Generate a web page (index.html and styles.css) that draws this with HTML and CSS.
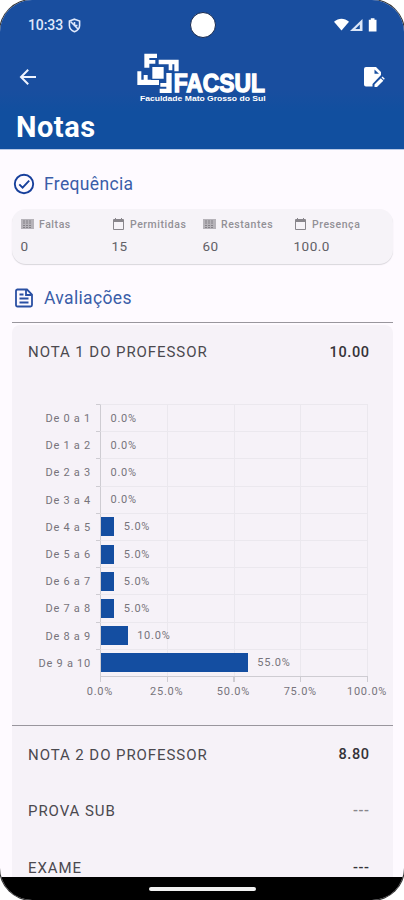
FILE: index.html
```html
<!DOCTYPE html>
<html lang="pt-BR">
<head>
    <meta charset="UTF-8">
    <meta name="viewport" content="width=device-width, initial-scale=1.0">
    <title>Notas</title>
    <link rel="stylesheet" href="styles.css">
</head>
<body>
    <div class="phone">
        <header class="header">
            <div class="status-bar">
                <span class="time">10:33</span>
                <svg class="shield" width="13" height="15" viewBox="0 0 13 15" fill="none" stroke="#dfe8fb" stroke-width="1.6">
                    <path d="M6.5 1.2L11.6 3v4.5c0 3-2 5-5.1 6.2C3.400 12.500 1.400 10.500 1.400 7.500V3z"/>
                    <path d="M2.500 3.500l8 8M6.500 4v3.500h3"/>
                </svg>
                <div class="status-icons">
                    <svg width="46" height="16" viewBox="0 0 46 16" fill="#fff">
                        <path d="M0 4.800C4.500.8 10.500.8 15 4.800L7.500 13.500z"/>
                        <path d="M28.500 2v12H16z" fill="#dce6f8"/>
                        <path d="M25.800 7.500V12h-4.500z" fill="#174f9f"/>
                        <path d="M34.800 2.800h2V1.300h3.700v1.500h2v11.700h-7.700z"/>
                    </svg>
                </div>
            </div>
            <div class="camera"></div>
            <div class="app-bar">
                <svg class="back" width="18" height="18" viewBox="0 0 18 18" fill="none" stroke="#eef3ff" stroke-width="2">
                    <path d="M17 9H2.500M9.200 1.700L2 9l7.200 7.300"/>
                </svg>
                <svg class="logo" width="135" height="56" viewBox="30 15 405 168" fill="#fff">
                    <path d="M61 26h38v13H76v6h18v11H76v12H61z"/>
                    <path d="M104 44h60v35h-13V58h-6v18h-11V58h-30z"/>
                    <path d="M40 120V79h12v25h7V90h12v14h34v16z"/>
                    <path d="M143 84v60h-36v-13h20v-6h-18v-11h18V84z"/>
                    <path d="M83 64h38v39H83z" stroke="#174f9f" stroke-width="4"/>
                    <text class="logo-name" x="149" y="142" textLength="274" lengthAdjust="spacingAndGlyphs">FACSUL</text>
                    <text class="logo-sub" x="48" y="168" textLength="377" lengthAdjust="spacingAndGlyphs">Faculdade Mato Grosso do Sul</text>
                </svg>
                <svg class="edit" width="22" height="22" viewBox="0 0 22 22">
                    <path d="M3 1h10l5 5v3L9.500 18v2.500H3Q1 20.500 1 18.500V3Q1 1 3 1z" fill="#fff"/>
                    <path d="M11.500 3.500v4.300H16z" fill="#174f9f"/>
                    <path d="M11.500 21v-2.500l6.300-6.300 2.500 2.500-6.300 6.300z" fill="#fff"/>
                    <path d="M18.500 11.500l1-1 2.300 2.300-1 1z" fill="#fff"/>
                </svg>
            </div>
            <h1>Notas</h1>
        </header>

        <main class="content">
            <h2 class="section-title">
                <svg width="22" height="22" viewBox="0 0 22 22" fill="none" stroke="#173f9b" stroke-width="1.900">
                    <circle cx="11" cy="11" r="9.200"/>
                    <path d="M6.300 11.300l3.300 3.300 6.600-6.900"/>
                </svg>
                <span>Frequência</span>
            </h2>

            <div class="summary">
                <div class="stat">
                    <div class="stat-label">
                        <svg width="13" height="12" viewBox="0 0 13 12"><path d="M0 1h13v10H0z" fill="#b6b3b9"/><path d="M2 3h9M2 5h9M2 7.500h9M2 9.500h9" stroke="#858288" stroke-dasharray="2 1"/></svg>
                        <span>Faltas</span>
                    </div>
                    <div class="stat-value">0</div>
                </div>
                <div class="stat">
                    <div class="stat-label">
                        <svg width="13" height="12" viewBox="0 0 13 12" fill="none" stroke="#89868c"><path d="M1.500 1.500h10v10h-10zM3.500 0v2M9.500 0v2"/><path d="M1 3h11" stroke-width="2"/></svg>
                        <span>Permitidas</span>
                    </div>
                    <div class="stat-value">15</div>
                </div>
                <div class="stat">
                    <div class="stat-label">
                        <svg width="13" height="12" viewBox="0 0 13 12"><path d="M0 1h13v10H0z" fill="#b6b3b9"/><path d="M2 3h9M2 5h9M2 7.500h9M2 9.500h9" stroke="#858288" stroke-dasharray="2 1"/></svg>
                        <span>Restantes</span>
                    </div>
                    <div class="stat-value">60</div>
                </div>
                <div class="stat">
                    <div class="stat-label">
                        <svg width="13" height="12" viewBox="0 0 13 12" fill="none" stroke="#89868c"><path d="M1.500 1.500h10v10h-10zM3.500 0v2M9.500 0v2"/><path d="M1 3h11" stroke-width="2"/></svg>
                        <span>Presença</span>
                    </div>
                    <div class="stat-value">100.0</div>
                </div>
            </div>

            <h2 class="section-title grades-title">
                <svg width="22" height="22" viewBox="0 0 22 22" fill="none" stroke="#2a4fa3" stroke-width="1.800">
                    <path d="M4 2.500h10l5 5V18q0 1.500-1.500 1.500h-13Q3 19.500 3 18V4q0-1.500 1.500-1.500z"/>
                    <path d="M13 3v5h5.500M6.500 7.500h4M6.500 11.500h9M6.500 15.500h9"/>
                </svg>
                <span>Avaliações</span>
            </h2>

            <div class="divider"></div>
            <div class="grades">
                <div class="grade">
                    <span>NOTA 1 DO PROFESSOR</span>
                    <span class="grade-value">10.00</span>
                </div>

                <div class="chart">
                    <div class="row"><span class="range">De 0 a 1</span><div class="track"><div class="bar" style="width: 0%"></div><span>0.0%</span></div></div>
                    <div class="row"><span class="range">De 1 a 2</span><div class="track"><div class="bar" style="width: 0%"></div><span>0.0%</span></div></div>
                    <div class="row"><span class="range">De 2 a 3</span><div class="track"><div class="bar" style="width: 0%"></div><span>0.0%</span></div></div>
                    <div class="row"><span class="range">De 3 a 4</span><div class="track"><div class="bar" style="width: 0%"></div><span>0.0%</span></div></div>
                    <div class="row"><span class="range">De 4 a 5</span><div class="track"><div class="bar" style="width: 5%"></div><span>5.0%</span></div></div>
                    <div class="row"><span class="range">De 5 a 6</span><div class="track"><div class="bar" style="width: 5%"></div><span>5.0%</span></div></div>
                    <div class="row"><span class="range">De 6 a 7</span><div class="track"><div class="bar" style="width: 5%"></div><span>5.0%</span></div></div>
                    <div class="row"><span class="range">De 7 a 8</span><div class="track"><div class="bar" style="width: 5%"></div><span>5.0%</span></div></div>
                    <div class="row"><span class="range">De 8 a 9</span><div class="track"><div class="bar" style="width: 10%"></div><span>10.0%</span></div></div>
                    <div class="row"><span class="range">De 9 a 10</span><div class="track"><div class="bar" style="width: 55%"></div><span>55.0%</span></div></div>
                    <div class="axis">
                        <span>0.0%</span><span>25.0%</span><span>50.0%</span><span>75.0%</span><span>100.0%</span>
                    </div>
                </div>

                <div class="grade second">
                    <span>NOTA 2 DO PROFESSOR</span>
                    <span class="grade-value">8.80</span>
                </div>
                <div class="grade">
                    <span>PROVA SUB</span>
                    <span class="grade-value muted">---</span>
                </div>
                <div class="grade">
                    <span>EXAME</span>
                    <span class="grade-value">---</span>
                </div>
            </div>
        </main>

        <footer class="nav-bar"><div class="handle"></div></footer>
    </div>
</body>
</html>
```
FILE: styles.css
```css
* {
    box-sizing: border-box;
}
body {
    margin: 0;
    background-color: #fff;
    font-family: Roboto, "Liberation Sans", sans-serif;
}
.phone {
    position: relative;
    display: flex;
    flex-direction: column;
    width: 404px;
    height: 900px;
    overflow: hidden;
    border-radius: 32px;
    background-color: #fefaff;
    box-shadow: 0 0 0 1px #333;
}
.header {
    flex: none;
    height: 150px;
    background: linear-gradient(#194e9f 60%, #114f9f 75%);
    border-bottom: 1px solid #b9c9e6;
    color: #fff;
}
.status-bar {
    display: flex;
    align-items: center;
    height: 50px;
    padding: 0 24px 0 28px;
}
.time {
    font-size: 14px;
    font-weight: 500;
    letter-spacing: -0.1px;
    color: #dfe8fb;
}
.shield {
    margin-left: 5px;
}
.status-icons {
    margin-left: auto;
    height: 16px;
}
.camera {
    position: absolute;
    top: 12px;
    left: 190px;
    width: 26px;
    height: 26px;
    border: 1px solid #15284d;
    border-radius: 50%;
    background-color: #fff;
}
.app-bar {
    display: flex;
    justify-content: space-between;
    height: 56px;
    padding: 0 19px;
}
.back {
    margin: 18px 0 0;
}
.edit {
    margin-top: 16px;
}
.logo {
    margin-left: 3px;
    overflow: visible;
}
.logo-name {
    font-family: "Liberation Sans", sans-serif;
    font-size: 75px;
    font-weight: bold;
    stroke: #fff;
    stroke-width: 4px;
}
.logo-sub {
    font-family: "Liberation Sans", sans-serif;
    font-size: 24px;
    font-weight: bold;
}
h1 {
    margin: 4px 0 0 16px;
    font-size: 29px;
    line-height: 35px;
    font-weight: 700;
    letter-spacing: 0.5px;
}
.content {
    flex: 1;
    min-height: 0;
    overflow: hidden;
    padding: 0 11px 0 12px;
}
.section-title {
    display: flex;
    align-items: center;
    gap: 9px;
    height: 24px;
    margin: 22px 0 13px 1px;
    color: #3a5da8;
    font-size: 17.5px;
    font-weight: 400;
    letter-spacing: 0.35px;
}
.summary {
    display: flex;
    height: 55px;
    padding: 8px 8px 0 9px;
    border-radius: 14px;
    background-color: #f6f3f8;
    box-shadow: 0 1px 1px #d9d6dc;
}
.stat {
    width: 91.3px;
}
.stat-label {
    display: flex;
    align-items: center;
    gap: 5px;
    height: 14px;
    color: #929096;
    font-size: 10.5px;
    font-weight: 500;
    letter-spacing: 0.55px;
    white-space: nowrap;
}
.stat-value {
    margin-top: 7px;
    margin-left: -0.5px;
    color: #626066;
    font-size: 13.5px;
    line-height: 17px;
    letter-spacing: 0.5px;
}
.grades-title {
    margin: 22px 0 12px 1px;
}
.divider {
    height: 1px;
    margin-bottom: 2px;
    background-color: #99969d;
}
.grades {
    border-radius: 8px 8px 0 0;
    background-color: #f6f2f8;
}
.grade {
    display: flex;
    align-items: center;
    justify-content: space-between;
    height: 57px;
    padding: 0 24px 0 16px;
    color: #4b494f;
    font-size: 15px;
    letter-spacing: 0.93px;
}
.grade:first-child {
    height: 54px;
}
.grade-value {
    margin-right: -0.6px;
    color: #353339;
    font-size: 14.5px;
    font-weight: 500;
    letter-spacing: 0.6px;
}
.muted {
    color: #89868c;
}
.second {
    border-top: 1px solid #99969d;
    padding-top: 1px;
}
.chart {
    height: 346px;
    padding-top: 25px;
    color: #77747b;
    font-size: 11px;
    letter-spacing: 0.75px;
}
.row {
    display: flex;
    height: 27.2px;
}
.range {
    width: 79px;
    margin-right: 9px;
    line-height: 29px;
    text-align: right;
}
.track {
    display: flex;
    align-items: center;
    flex: none;
    order: 2;
    width: 268px;
    border-left: 1px solid #ceccd2;
    border-top: 1px solid #ebe8ee;
    background: repeating-linear-gradient(to right, transparent 0 65.8px, #ebe8ee 65.8px 66.8px);
}
/* tick mark beside the category line */
.row::after {
    content: "";
    order: 1;
    width: 4px;
    height: 1px;
    margin-left: -4px;
    background-color: #ceccd2;
}
.bar {
    flex: none;
    height: 19px;
    background-color: #144ea1;
}
.track span {
    margin-left: 9.5px;
}
.axis {
    display: grid;
    grid-template-columns: repeat(5, 66.8px);
    width: 334px;
    margin-left: 54.5px;
    padding-top: 9px;
    position: relative;
    text-align: center;
}
.axis::before {
    content: "";
    position: absolute;
    top: 0;
    left: 33.5px;
    width: 268px;
    height: 5px;
    border-top: 1px solid #ceccd2;
    background: repeating-linear-gradient(to right, #ceccd2 0 1px, transparent 1px 66.75px);
}
.nav-bar {
    flex: none;
    height: 23px;
    padding-top: 10px;
    background-color: #000;
}
.handle {
    width: 107px;
    height: 4px;
    margin: 0 auto;
    border-radius: 2px;
    background-color: #f1f1f1;
}
```
